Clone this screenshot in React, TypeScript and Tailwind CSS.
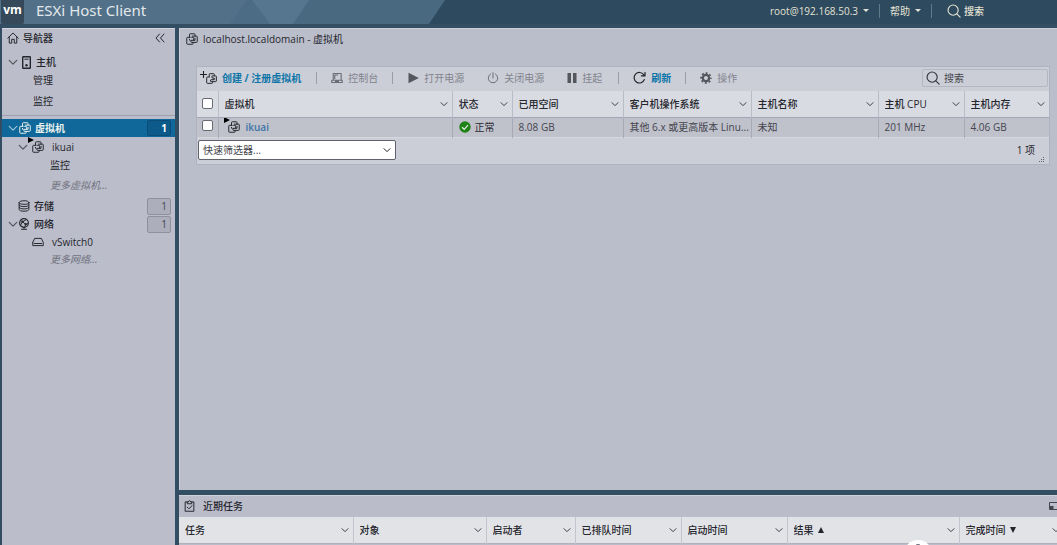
import type { ReactNode } from "react";

type IconProps = { className?: string };

function Svg({ className = "size-3", children, box = "0 0 16 16" }: IconProps & { children: ReactNode; box?: string }) {
  return (
    <svg viewBox={box} className={`shrink-0 ${className}`} fill="none" stroke="currentColor" strokeWidth="1.3" strokeLinejoin="round" strokeLinecap="round" aria-hidden="true">
      {children}
    </svg>
  );
}

const VmIcon = ({ className }: IconProps) => (
  <Svg className={className}>
    <path d="M4.700 5.800V2a1 1 0 0 1 1-1H11a1 1 0 0 1 1 1v2.200M4.700 8.500V9.500" />
    <path d="M5.500 5.800H2a1 1 0 0 0-1 1V14a1 1 0 0 0 1 1h6.500a1 1 0 0 0 1-1v-1.500" />
    <path d="M8.500 4.200H14a1 1 0 0 1 1 1v6.300a1 1 0 0 1-1 1H7.500a1 1 0 0 1-1-1V10M7.500 5.800h1.700a1 1 0 0 1 1 1V9.800H7M12 7v2.800h-1.800" />
  </Svg>
);

const RunningVmIcon = () => (
  <span className="relative flex shrink-0">
    <VmIcon className="size-3" />
    <svg viewBox="0 0 6 6" className="absolute -top-1 -left-1 size-[6px]" aria-hidden="true">
      <path d="M0 0L6 3L0 6Z" fill="#000" />
    </svg>
  </span>
);

const NewVmIcon = () => (
  <svg viewBox="0 0 17 14" className="h-[14px] w-[17px] shrink-0" fill="none" stroke="currentColor" aria-hidden="true">
    <path d="M0 3.500h7M3.500 0v7" strokeWidth="1.100" />
    <g transform="translate(6 2) scale(.69)" strokeWidth="1.400" strokeLinejoin="round">
      <path d="M4.700 5.800V2a1 1 0 0 1 1-1H11a1 1 0 0 1 1 1v2.200M5.500 5.800H2a1 1 0 0 0-1 1V14a1 1 0 0 0 1 1h6.500a1 1 0 0 0 1-1v-1.500" />
      <path d="M8.500 4.200H14a1 1 0 0 1 1 1v6.300a1 1 0 0 1-1 1H7.500a1 1 0 0 1-1-1V10M7.500 5.800h1.700a1 1 0 0 1 1 1V9.800H7M12 7v2.800h-1.800" />
    </g>
  </svg>
);

const ChevronIcon = ({ className = "size-2" }: IconProps) => (
  <Svg className={className} box="0 0 12 12">
    <path d="M1.500 4L6 8.500L10.500 4" strokeWidth="1.500" />
  </Svg>
);

const SearchIcon = () => (
  <Svg className="size-[14px]">
    <circle cx="7" cy="7" r="5.800" />
    <path d="M11.200 11.200L15 15" />
  </Svg>
);

const HomeIcon = () => (
  <Svg className="size-3">
    <path d="M1 8.200L8 1.300l7 6.900M3 6.600V14.800h3.300V9.800h3.400v5H13V6.600" />
  </Svg>
);

const HostIcon = () => (
  <Svg className="h-[13px] w-[9px]" box="0 0 9 13">
    <rect x=".7" y=".7" width="7.600" height="11.600" rx=".5" strokeWidth="1.400" />
    <path d="M2.800 3.200h3.400" strokeWidth="1" />
    <circle cx="4.500" cy="9.300" r="1.200" fill="currentColor" stroke="none" />
  </Svg>
);

const StorageIcon = () => (
  <Svg className="size-3">
    <ellipse cx="8" cy="3.400" rx="6.500" ry="2.400" />
    <path d="M1.500 3.400v9.200c0 1.300 2.900 2.400 6.500 2.400s6.500-1.100 6.500-2.400V3.400M1.500 6.500c0 1.300 2.900 2.300 6.500 2.300s6.500-1 6.500-2.300M1.500 9.600c0 1.300 2.900 2.300 6.500 2.300s6.500-1 6.500-2.300" />
  </Svg>
);

const NetworkIcon = () => (
  <Svg className="size-3">
    <circle cx="8" cy="6.600" r="5.800" strokeWidth="1.600" />
    <path d="M4 3.500L6 5L10.500 2.500M6 5L10.200 8.400L13 7.500M10.200 8.400L9 12M3.500 9.500L6 5M8 12.400v2.200M4.500 15h7" />
    <circle cx="6" cy="5" r="1" fill="currentColor" />
    <circle cx="10.200" cy="8.400" r="1" fill="currentColor" />
  </Svg>
);

const SwitchIcon = () => (
  <Svg className="h-[10px] w-3" box="0 0 16 12">
    <path d="M1 6.500L3.500 1.200h9L15 6.500V10.800H1V6.500M3 8h10" />
  </Svg>
);

const CollapseIcon = () => (
  <Svg className="h-[10px] w-[10px]" box="0 0 10 10">
    <path d="M4.500 1L1 5l3.500 4M9 1L5.500 5L9 9" strokeWidth="1" />
  </Svg>
);

const ConsoleIcon = () => (
  <Svg className="size-3">
    <path d="M3 10V2h10.500v8M5 9V4h4M1 11h14v3H1zM6 12.500h4" strokeWidth="1.500" />
  </Svg>
);

const PlayIcon = () => (
  <svg viewBox="0 0 11 12" className="h-3 w-[11px] shrink-0" aria-hidden="true">
    <path d="M.5 .8L10.800 6L.5 11.200Z" fill="#55565e" />
  </svg>
);

const PowerIcon = () => (
  <Svg className="size-3">
    <path d="M8 1v7M4.800 2.600a6.300 6.300 0 1 0 6.400 0" />
  </Svg>
);

const PauseIcon = () => (
  <svg viewBox="0 0 10 12" className="h-3 w-[10px] shrink-0" aria-hidden="true">
    <path d="M.5 1h3.500v10H.5zM6 1h3.500v10H6z" fill="#55565e" />
  </svg>
);

const RefreshIcon = () => (
  <Svg className="size-[13px]">
    <path d="M14 10.500A6.500 6.500 0 1 1 13.200 4.500L14.800 6M14.800 1.500V6H10.300" strokeWidth="1.400" />
  </Svg>
);

const GearIcon = () => (
  <svg viewBox="0 0 16 16" className="size-3 shrink-0" aria-hidden="true">
    <g fill="none" stroke="#55565e">
      <circle cx="8" cy="8" r="4.200" strokeWidth="3" />
      <circle cx="8" cy="8" r="6.500" strokeWidth="2.400" strokeDasharray="2.550 2.550" strokeDashoffset="1.270" />
    </g>
  </svg>
);

const CheckIcon = () => (
  <svg viewBox="0 0 12 12" className="size-3 shrink-0" aria-hidden="true">
    <circle cx="6" cy="6" r="5.700" fill="#1f8217" />
    <path d="M3 6.200L5.200 8.300L9 4.200" fill="none" stroke="#e5efe5" strokeWidth="1.200" />
  </svg>
);

const TasksIcon = () => (
  <Svg className="h-3 w-[11px]" box="0 0 14 16">
    <path d="M4 2.500H1.200V15h11.600V2.500H10M4 4.500V2.500h1.500a1.500 1.500 0 0 1 3 0H10v2zM4 9.500l2.200 2.200L10.500 7.500" />
  </Svg>
);

const Caret = ({ up = false, className = "h-1 w-[6px]" }: IconProps & { up?: boolean }) => (
  <svg viewBox="0 0 6 4" preserveAspectRatio="none" className={`shrink-0 ${className}`} aria-hidden="true">
    <path d={up ? "M0 4L3 0L6 4Z" : "M0 0L3 4L6 0Z"} fill="currentColor" />
  </svg>
);

function Badge({ selected = false }: { selected?: boolean }) {
  return (
    <span
      className={
        selected
          ? "ml-auto flex h-4 w-6 items-center justify-end rounded-[2px] border border-[#0b4d78] bg-[#0c5a8a] pr-[3px] font-bold text-white"
          : "ml-auto flex h-[17px] w-6 items-center justify-end rounded-[2px] border border-[#8e909c] bg-[#acaebb] pr-[3px] text-[#44454e]"
      }
    >
      1
    </span>
  );
}

function Expander({ label, className = "text-[#55565f]" }: { label: string; className?: string }) {
  return (
    <button type="button" aria-label={label} className={`flex shrink-0 ${className}`}>
      <ChevronIcon className="size-[10px]" />
    </button>
  );
}

function Divider() {
  return <span className="h-3 w-px shrink-0 bg-[#9a9ca8]" />;
}

function Tool({ icon, children, active = false }: { icon: ReactNode; children: string; active?: boolean }) {
  return (
    <button type="button" disabled={!active} className={active ? "flex shrink-0 items-center gap-[5px] font-bold text-[#0d75a8]" : "flex shrink-0 items-center gap-[5px] text-[#82848e]"}>
      <span className={active ? "flex text-[#222329]" : "flex text-[#6a6c76]"}>{icon}</span>
      {children}
    </button>
  );
}

function HeadCell({ children, sort, className = "" }: { children: string; sort?: "up" | "down"; className?: string }) {
  return (
    <th scope="col" className={`p-0 text-left font-medium ${className}`}>
      <div className="flex items-center gap-1 pr-1 pl-[6px]">
        <span className="truncate">{children}</span>
        {sort && <Caret up={sort === "up"} className="h-[6px] w-[6px]" />}
        <button type="button" aria-label={`${children} 列选项`} className="ml-auto flex shrink-0 text-[#3c3d45]">
          <ChevronIcon />
        </button>
      </div>
    </th>
  );
}

function TopBar() {
  return (
    <header className="relative flex h-6 shrink-0 items-center overflow-hidden bg-[#2e4a5e] text-[10px] text-[#e4e2d4]">
      <svg viewBox="0 0 450 24" className="absolute top-0 left-0 h-6 w-[450px]" aria-hidden="true">
        <path d="M0 0H445L429 24H0Z" fill="#486980" />
        <path d="M0 0H309L293 24H0Z" fill="#56758e" />
        <path d="M0 0H247L230 24H0Z" fill="#527188" />
        <path d="M247 0L230 24H270L252 0Z" fill="#4b6c84" />
      </svg>
      <div className="relative flex h-full items-center">
        <div className="ml-px flex h-full w-[23px] items-center justify-center rounded-b-[2px] bg-[#35495a] pb-1 font-['Open_Sans',sans-serif] text-[12px] leading-none font-bold text-white">vm</div>
        <h1 className="ml-3 pb-1 font-['Noto_Sans',sans-serif] text-[15px] leading-5 text-[#e3e8ec]">ESXi Host Client</h1>
      </div>
      <div className="relative mr-[73px] ml-auto flex items-center pb-[3px]">
        <button type="button" className="flex items-center gap-[5px]">root@192.168.50.3 <Caret className="h-[3px] w-[6px]" /></button>
        <span className="mx-[10px] h-[14px] w-px bg-[#5c7c89]" />
        <button type="button" className="flex items-center gap-[5px]">帮助 <Caret className="h-[3px] w-[6px]" /></button>
        <span className="mr-[15px] ml-[10px] h-[14px] w-px bg-[#5c7c89]" />
        <button type="button" className="flex items-center gap-[3px] font-medium"><SearchIcon />搜索</button>
      </div>
    </header>
  );
}

function Navigator() {
  return (
    <nav aria-label="导航器" className="w-[173px] shrink-0 overflow-hidden border-t border-[#d4d4de] bg-[#bbbdca] pt-px">
      <div className="flex h-4 items-center gap-1 pr-[10px] pl-[5px] font-medium">
        <HomeIcon />
        导航器
        <button type="button" aria-label="折叠" className="ml-auto flex"><CollapseIcon /></button>
      </div>
      <div className="mt-[6px] flex h-5 items-center pl-[6px]">
        <Expander label="主机" />
        <a href="#host" className="ml-1 flex items-center gap-[5px] font-medium"><HostIcon />主机</a>
      </div>
      <a href="#manage" className="flex h-4 items-center pl-[31px]">管理</a>
      <a href="#monitor" className="mt-[5px] flex h-4 items-center pl-[31px]">监控</a>
      <div className="mt-[6px] border-t border-[#9fa0ad]" />
      <div className="mt-[3px] flex h-[18px] items-center bg-[#0f6899] pr-1 pl-[6px] text-[#eaf2ee]">
        <Expander label="虚拟机" className="text-[#9cc3d8]" />
        <a href="#vms" aria-current="page" className="flex items-center gap-1 pl-px font-bold"><VmIcon className="size-3" />虚拟机</a>
        <Badge selected />
      </div>
      <div className="flex h-5 items-center pl-4">
        <Expander label="ikuai" />
        <a href="#ikuai" className="ml-1 flex items-center gap-2"><RunningVmIcon />ikuai</a>
      </div>
      <a href="#ikuai-monitor" className="flex h-4 items-center pl-[48px]">监控</a>
      <a href="#more-vms" className="mt-1 flex h-4 items-center pl-[48px] text-[#71737f] italic">更多虚拟机...</a>
      <div className="mt-1 flex h-[18px] items-center pr-1 pl-4">
        <a href="#storage" className="flex items-center gap-1 font-medium"><StorageIcon />存储</a>
        <Badge />
      </div>
      <div className="flex h-[18px] items-center pr-1 pl-[6px]">
        <Expander label="网络" />
        <a href="#network" className="flex items-center gap-1 font-medium"><NetworkIcon />网络</a>
        <Badge />
      </div>
      <a href="#vswitch0" className="flex h-[18px] items-center gap-2 pl-[30px]"><SwitchIcon />vSwitch0</a>
      <a href="#more-networks" className="flex h-4 items-center pl-[48px] text-[#71737f] italic">更多网络...</a>
    </nav>
  );
}

const cell = "overflow-hidden whitespace-nowrap border-l border-[#a7a9b6] py-0";

function VmGrid() {
  return (
    <div className="mr-[7px] ml-4 border border-[#b0b2c0] bg-[#cbcdd7]">
      <div className="flex h-6 items-center pr-px pb-[3px] pl-[3px]">
        <Tool active icon={<NewVmIcon />}>创建 / 注册虚拟机</Tool>
        <div className="ml-[15px] flex items-center gap-[14px]">
          <Divider />
          <Tool icon={<ConsoleIcon />}>控制台</Tool>
          <Divider />
        </div>
        <div className="ml-[15px] flex items-center gap-[23px]">
          <Tool icon={<PlayIcon />}>打开电源</Tool>
          <Tool icon={<PowerIcon />}>关闭电源</Tool>
          <Tool icon={<PauseIcon />}>挂起</Tool>
        </div>
        <div className="ml-4 flex items-center gap-[14px]">
          <Divider />
          <Tool active icon={<RefreshIcon />}>刷新</Tool>
          <Divider />
          <Tool icon={<GearIcon />}>操作</Tool>
        </div>
        <label className="ml-auto flex h-[18px] w-[126px] items-center gap-1 rounded-[2px] border border-[#b4b6c2] pl-[3px] text-[#33343c]">
          <SearchIcon />
          <input type="text" aria-label="搜索" placeholder="搜索" className="w-full min-w-0 bg-transparent outline-none placeholder:text-[#44454d]" />
        </label>
      </div>
      <table className="w-full table-fixed border-collapse">
        <colgroup>
          <col className="w-[21px]" />
          <col />
          <col className="w-[60px]" />
          <col className="w-[111px]" />
          <col className="w-[128px]" />
          <col className="w-[127px]" />
          <col className="w-[86px]" />
          <col className="w-[85px]" />
        </colgroup>
        <thead>
          <tr className="h-[26px] border-b border-[#a4a6b3] bg-[#d9dbe2]">
            <th scope="col" className="p-0">
              <input type="checkbox" aria-label="全选" className="mx-auto block size-[11px] appearance-none rounded-[2px] border border-[#686a74] bg-white" />
            </th>
            {["虚拟机", "状态", "已用空间", "客户机操作系统", "主机名称", "主机 CPU", "主机内存"].map((name) => (
              <HeadCell key={name} className="border-l border-[#b9bbc6]">{name}</HeadCell>
            ))}
          </tr>
        </thead>
        <tbody>
          <tr className="h-5 border-b border-[#d6d8e0] bg-[#bfc1cb] text-[#44454d]">
            <td className="p-0 pb-[3px]">
              <input type="checkbox" aria-label="选择 ikuai" className="mx-auto block size-[11px] appearance-none rounded-[2px] border border-[#686a74] bg-white" />
            </td>
            <td className={`${cell} pl-[9px]`}>
              <a href="#ikuai" className="flex items-center gap-[6px] font-semibold text-[#3d74a5]"><span className="flex text-[#222329]"><RunningVmIcon /></span>ikuai</a>
            </td>
            <td className={`${cell} pl-[6px]`}><span className="flex items-center gap-1 text-[#2b2c33]"><CheckIcon />正常</span></td>
            <td className={`${cell} pl-[6px]`}>8.08 GB</td>
            <td className={`${cell} pl-[6px]`}>其他 6.x 或更高版本 Linu...</td>
            <td className={`${cell} pl-[6px]`}>未知</td>
            <td className={`${cell} pl-[6px]`}>201 MHz</td>
            <td className={`${cell} pl-[6px]`}>4.06 GB</td>
          </tr>
        </tbody>
      </table>
      <div className="flex h-[26px] items-center pr-1 pb-px pl-px">
        <div className="relative">
          <select aria-label="快速筛选器" className="block h-5 w-[198px] appearance-none rounded-[2px] border border-[#5f616b] bg-white px-1 text-[#44454d]">
            <option>快速筛选器...</option>
          </select>
          <ChevronIcon className="pointer-events-none absolute top-[6px] right-[5px] size-2" />
        </div>
        <span className="mr-1 ml-auto pb-px">1 项</span>
        <svg viewBox="0 0 6 6" className="size-[6px] shrink-0 self-end" fill="#60626d" aria-hidden="true">
          <path d="M4 0h1v1H4zM2 2h1v1H2zM4 2h1v1H4zM0 4h1v1H0zM2 4h1v1H2zM4 4h1v1H4z" />
        </svg>
      </div>
    </div>
  );
}

function RecentTasks() {
  return (
    <section className="h-[50px] shrink-0 overflow-hidden border-t border-[#d0d1db] bg-[#babcca]">
      <div className="flex h-[21px] items-center gap-2 pb-[2px] pl-[5px] font-medium">
        <TasksIcon />
        近期任务
        <button type="button" aria-label="最小化" className="ml-auto flex text-[#44454d]">
          <svg viewBox="0 0 8 8" className="size-2" aria-hidden="true">
            <path d="M.5 .5H9M.5 .5v7H9" fill="none" stroke="currentColor" />
            <path d="M1 4h3.500v3.500H1z" fill="currentColor" />
          </svg>
        </button>
      </div>
      <table className="w-full min-w-[885px] table-fixed border-collapse">
        <colgroup>
          <col />
          <col className="w-[133px]" />
          <col className="w-[89px]" />
          <col className="w-[106px]" />
          <col className="w-[106px]" />
          <col className="w-[172px]" />
          <col className="w-[105px]" />
        </colgroup>
        <thead>
          <tr className="h-[26px] border-b border-[#b0b1bb] bg-[#e2e3e7]">
            <HeadCell>任务</HeadCell>
            <HeadCell className="border-l border-[#c3c4cd]">对象</HeadCell>
            <HeadCell className="border-l border-[#c3c4cd]">启动者</HeadCell>
            <HeadCell className="border-l border-[#c3c4cd]">已排队时间</HeadCell>
            <HeadCell className="border-l border-[#c3c4cd]">启动时间</HeadCell>
            <HeadCell sort="up" className="border-l border-[#c3c4cd]">结果</HeadCell>
            <HeadCell sort="down" className="border-l border-[#c3c4cd]">完成时间</HeadCell>
          </tr>
        </thead>
      </table>
    </section>
  );
}

export default function App() {
  return (
    <div className="relative flex h-screen flex-col overflow-hidden bg-[#334e62] font-['Open_Sans','Noto_Sans_CJK_SC',sans-serif] text-[10px] leading-4 text-[#25262d]">
      <TopBar />
      <div className="mt-1 flex min-h-0 flex-1 gap-1 pl-[2px]">
        <Navigator />
        <div className="flex min-w-0 flex-1 flex-col gap-[5px]">
          <main className="min-h-0 flex-1 border-t border-l border-[#cdced9] bg-[#babdca]">
            <div className="flex h-[19px] items-center gap-[5px] pl-[6px]">
              <VmIcon className="size-3" />
              localhost.localdomain - 虚拟机
            </div>
            <div className="mt-[18px]">
              <VmGrid />
            </div>
          </main>
          <RecentTasks />
        </div>
      </div>
      <button type="button" aria-label="展开" className="absolute right-[125px] -bottom-[23px] flex size-7 justify-center rounded-full bg-white pt-1">
        <span className="h-[2px] w-1 rounded-full bg-[#777985]" />
      </button>
    </div>
  );
}
